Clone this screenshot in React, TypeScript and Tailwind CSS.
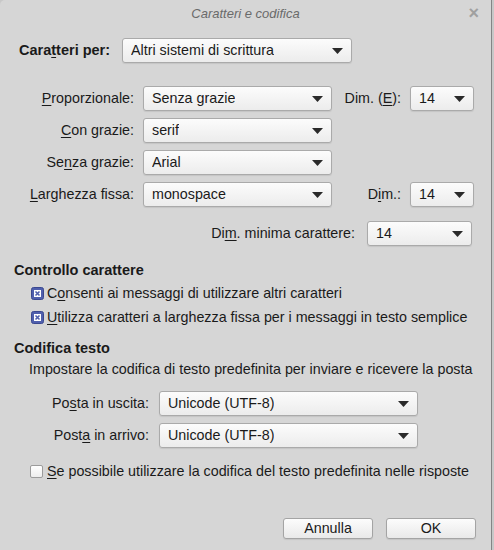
import clsx from "clsx";

const txt = "font-['Liberation_Sans',Arial,sans-serif]";

function U({ children }: { children: string }) {
  return <span className="underline underline-offset-2">{children}</span>;
}

function Arrow() {
  return (
    <svg width="11" height="6" viewBox="0 0 11 6" className="shrink-0">
      <path d="M0 0 H11 L5.5 6 Z" fill="#2a2a2a" />
    </svg>
  );
}

function Select({ value, className }: { value: string; className?: string }) {
  return (
    <div
      className={clsx(
        "flex h-[25px] items-center justify-between rounded-[3px] border border-[#aaaaaa] bg-gradient-to-b from-[#fcfcfc] to-[#ececec] pl-[8px] pr-[8px] shadow-[0_1px_1px_rgba(0,0,0,0.08)]",
        className
      )}
    >
      <span className="truncate">{value}</span>
      <Arrow />
    </div>
  );
}

function Check({ checked }: { checked: boolean }) {
  if (checked) {
    return (
      <svg width="13" height="13" viewBox="0 0 13 13" className="shrink-0">
        <rect x="0.5" y="0.5" width="12" height="12" rx="2" fill="#4f5fad" stroke="#3b4890" />
        <rect x="3" y="3" width="7" height="7" fill="#ffffff" />
        <path d="M4.5 4.5 L8.5 8.5 M8.5 4.5 L4.5 8.5" stroke="#4f5fad" strokeWidth="1.6" />
      </svg>
    );
  }
  return (
    <span className="h-[13px] w-[13px] shrink-0 rounded-[2px] border border-[#9c9c9c] bg-gradient-to-b from-[#ffffff] to-[#eeeeee]" />
  );
}

function Button({ label }: { label: string }) {
  return (
    <div className="flex h-[21px] w-[90px] items-center justify-center rounded-[3px] border border-[#a4a4a4] bg-gradient-to-b from-[#fcfcfc] to-[#e9e9e9] shadow-[0_1px_1px_rgba(0,0,0,0.08)]">
      {label}
    </div>
  );
}

export default function App() {
  return (
    <div className={clsx("flex h-[550px] w-[494px] bg-[#c8c8c8] text-[14.3px] leading-[17px] text-[#1a1a1a]", txt)}>
      <div className="flex h-[550px] w-[492px] flex-col rounded-tl-[5px] border-r border-[#858585] bg-[#d6d6d6]">
        {/* title bar */}
        <div className="grid h-[26px] grid-cols-[1fr_auto_1fr] items-center">
          <span />
          <span className="text-[13px] italic text-[#6a6a6a]">Caratteri e codifica</span>
          <span className="justify-self-end pr-[12px] text-[18px] font-bold leading-none text-[#a0a0a0]">×</span>
        </div>

        <div className="mt-[12px] flex items-center pl-[19px]">
          <span className="w-[103px] text-[14.5px] font-bold">
            Cara<U>t</U>teri per:
          </span>
          <Select value="Altri sistemi di scrittura" className="w-[230px]" />
        </div>

        {/* font rows */}
        <div className="mt-[23px] grid grid-cols-[134px_189px_60px_64px] items-center gap-x-[9px] gap-y-[7px]">
          <span className="text-right">
            <U>P</U>roporzionale:
          </span>
          <Select value="Senza grazie" />
          <span className="whitespace-nowrap text-right">
            Dim. (<U>E</U>):
          </span>
          <Select value="14" />

          <span className="text-right">
            <U>C</U>on grazie:
          </span>
          <Select value="serif" />
          <span />
          <span />

          <span className="text-right">
            Se<U>n</U>za grazie:
          </span>
          <Select value="Arial" />
          <span />
          <span />

          <span className="text-right">
            <U>L</U>arghezza fissa:
          </span>
          <Select value="monospace" />
          <span className="text-right">
            D<U>i</U>m.:
          </span>
          <Select value="14" />
        </div>

        <div className="mt-[14px] flex items-center justify-end gap-[12px] pr-[19px]">
          <span>
            Di<U>m</U>. minima carattere:
          </span>
          <Select value="14" className="w-[105px]" />
        </div>

        <div className="mt-[16px] pl-[14px] text-[14.5px] font-bold">Controllo carattere</div>
        <div className="mt-[2px] flex flex-col pl-[31px]">
          <div className="flex h-[24px] items-center gap-[3px]">
            <Check checked />
            <span>
              C<U>o</U>nsenti ai messaggi di utilizzare altri caratteri
            </span>
          </div>
          <div className="flex h-[24px] items-center gap-[3px]">
            <Check checked />
            <span>
              <U>U</U>tilizza caratteri a larghezza fissa per i messaggi in testo semplice
            </span>
          </div>
        </div>

        <div className="mt-[11px] pl-[14px] text-[14.5px] font-bold">Codifica testo</div>
        <div className="mt-[4px] pl-[29px]">
          Impostare la codifica di testo predefinita per inviare e ricevere la posta
        </div>

        <div className="mt-[13px] grid grid-cols-[149px_259px] items-center gap-x-[10px] gap-y-[7px]">
          <span className="text-right">
            Po<U>s</U>ta in uscita:
          </span>
          <Select value="Unicode (UTF-8)" />
          <span className="text-right">
            Post<U>a</U> in arrivo:
          </span>
          <Select value="Unicode (UTF-8)" />
        </div>

        <div className="mt-[11px] flex h-[24px] items-center gap-[4px] pl-[30px]">
          <Check checked={false} />
          <span>
            <U>S</U>e possibile utilizzare la codifica del testo predefinita nelle risposte
          </span>
        </div>

        <div className="mt-auto flex justify-end gap-[13px] pb-[11px] pr-[15px]">
          <Button label="Annulla" />
          <Button label="OK" />
        </div>
      </div>
    </div>
  );
}
